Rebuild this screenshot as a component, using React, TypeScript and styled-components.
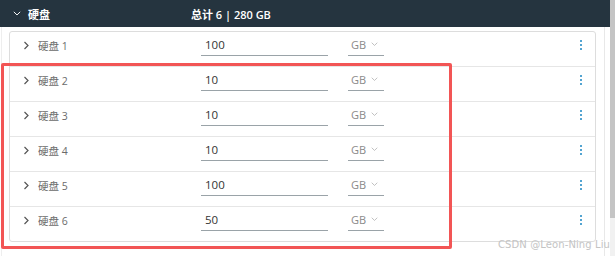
import React, { FC } from "react";
import styled, { createGlobalStyle } from "styled-components";

const GlobalStyle = createGlobalStyle`
  html, body {
    margin: 0;
    padding: 0;
    background: #ffffff;
    width: 615px;
    height: 256px;
    overflow: hidden;
  }
  body {
    font-family: "Open Sans", "Noto Sans CJK SC", sans-serif;
  }
`;

const Colors = {
  header: "#25343f",
  border: "#dddddd",
  divider: "#e6e6e6",
  label: "#6b6b6b",
  text: "#333333",
  underline: "#9aa3a8",
  blue: "#1a86c2",
  annotation: "#f25555",
};

const Page = styled.div`
  position: relative;
  display: flex;
  width: 615px;
  height: 256px;
  background: #ffffff;
`;

const Main = styled.div`
  flex: 1;
  display: flex;
  flex-direction: column;
`;

const Header = styled.div`
  height: 27px;
  flex-shrink: 0;
  display: grid;
  grid-template-columns: 15px 163px 1fr;
  align-items: center;
  padding-left: 13px;
  background: ${Colors.header};
  color: #ffffff;
  font-size: 11px;
  font-weight: 600;
`;

const Body = styled.div`
  flex: 1;
  padding-top: 4px;
  border-left: 1px solid #eeeeee;
  border-right: 1px solid #e8e8e8;
  margin: 0 5px 0 1px;
  padding-left: 7px;
  padding-right: 8px;
`;

const Card = styled.div`
  border: 1px solid ${Colors.border};
  border-radius: 3px;
  background: #ffffff;
  overflow: hidden;
`;

const Row = styled.div<{ $last?: boolean }>`
  box-sizing: border-box;
  height: ${(p) => (p.$last ? 34 : 35)}px;
  padding: 0 12px 8px 13px;
  display: flex;
  align-items: center;
  border-bottom: ${(p) => (p.$last ? "none" : `1px solid ${Colors.divider}`)};
`;

const Chevron = styled.span`
  width: 15px;
  display: flex;
  align-items: center;
  color: #555555;
`;

const Label = styled.span`
  width: 163px;
  font-size: 10.5px;
  color: ${Colors.label};
`;

const SizeInput = styled.div`
  box-sizing: border-box;
  width: 127px;
  height: 22px;
  padding: 0 4px;
  display: flex;
  align-items: center;
  border-bottom: 1px solid ${Colors.underline};
  font-size: 11.5px;
  color: ${Colors.text};
`;

const UnitSelect = styled.div`
  box-sizing: border-box;
  width: 36px;
  height: 22px;
  margin-left: 20px;
  padding: 0 3px;
  display: flex;
  align-items: center;
  gap: 5px;
  border-bottom: 1px solid ${Colors.underline};
  font-size: 11px;
  color: #8a8a8a;
`;

const Spacer = styled.div`
  flex: 1;
`;

const Kebab = styled.div`
  width: 4px;
  display: flex;
  flex-direction: column;
  align-items: center;
  gap: 1.6px;

  span {
    width: 2.6px;
    height: 2.6px;
    border-radius: 50%;
    background: ${Colors.blue};
  }
`;

const Scrollbar = styled.div`
  width: 5px;
  background: #f1f1f1;
  display: flex;
  flex-direction: column;
`;

const Thumb = styled.div`
  height: 218px;
  background: #c4c4c4;
`;

const Annotation = styled.div`
  position: absolute;
  left: 1px;
  top: 63px;
  width: 451px;
  height: 186px;
  box-sizing: border-box;
  border: 3px solid ${Colors.annotation};
  border-radius: 2px;
  pointer-events: none;
`;

const Watermark = styled.div`
  position: absolute;
  right: 5px;
  top: 239px;
  font-family: "DejaVu Sans", sans-serif;
  font-size: 10px;
  color: #c4c4c4;
  letter-spacing: 0.1px;
`;

const disks = [
  { name: "硬盘 1", size: "100" },
  { name: "硬盘 2", size: "10" },
  { name: "硬盘 3", size: "10" },
  { name: "硬盘 4", size: "10" },
  { name: "硬盘 5", size: "100" },
  { name: "硬盘 6", size: "50" },
];

const ChevronRight: FC = () => (
  <svg width="7" height="9" viewBox="0 0 7 9">
    <path d="M1.5 1 L5 4.5 L1.5 8" fill="none" stroke="currentColor" strokeWidth="1.2" />
  </svg>
);

const ChevronDown: FC<{ color: string; size?: number }> = ({ color, size = 8 }) => (
  <svg width={size} height={size * 0.6} viewBox="0 0 10 6">
    <path d="M1 1 L5 5 L9 1" fill="none" stroke={color} strokeWidth="1.2" />
  </svg>
);

export default function App() {
  return (
    <Page>
      <GlobalStyle />
      <Main>
        <Header>
          <ChevronDown color="#ffffff" size={8} />
          <span>硬盘</span>
          <span>总计 6 | 280 GB</span>
        </Header>
        <Body>
          <Card>
            {disks.map((d, i) => (
              <Row key={d.name} $last={i === disks.length - 1}>
                <Chevron>
                  <ChevronRight />
                </Chevron>
                <Label>{d.name}</Label>
                <SizeInput>{d.size}</SizeInput>
                <UnitSelect>
                  GB
                  <ChevronDown color="#b5b5b5" size={7} />
                </UnitSelect>
                <Spacer />
                <Kebab>
                  <span />
                  <span />
                  <span />
                </Kebab>
              </Row>
            ))}
          </Card>
        </Body>
      </Main>
      <Scrollbar>
        <Thumb />
      </Scrollbar>
      <Annotation />
      <Watermark>CSDN @Leon-Ning Liu</Watermark>
    </Page>
  );
}
